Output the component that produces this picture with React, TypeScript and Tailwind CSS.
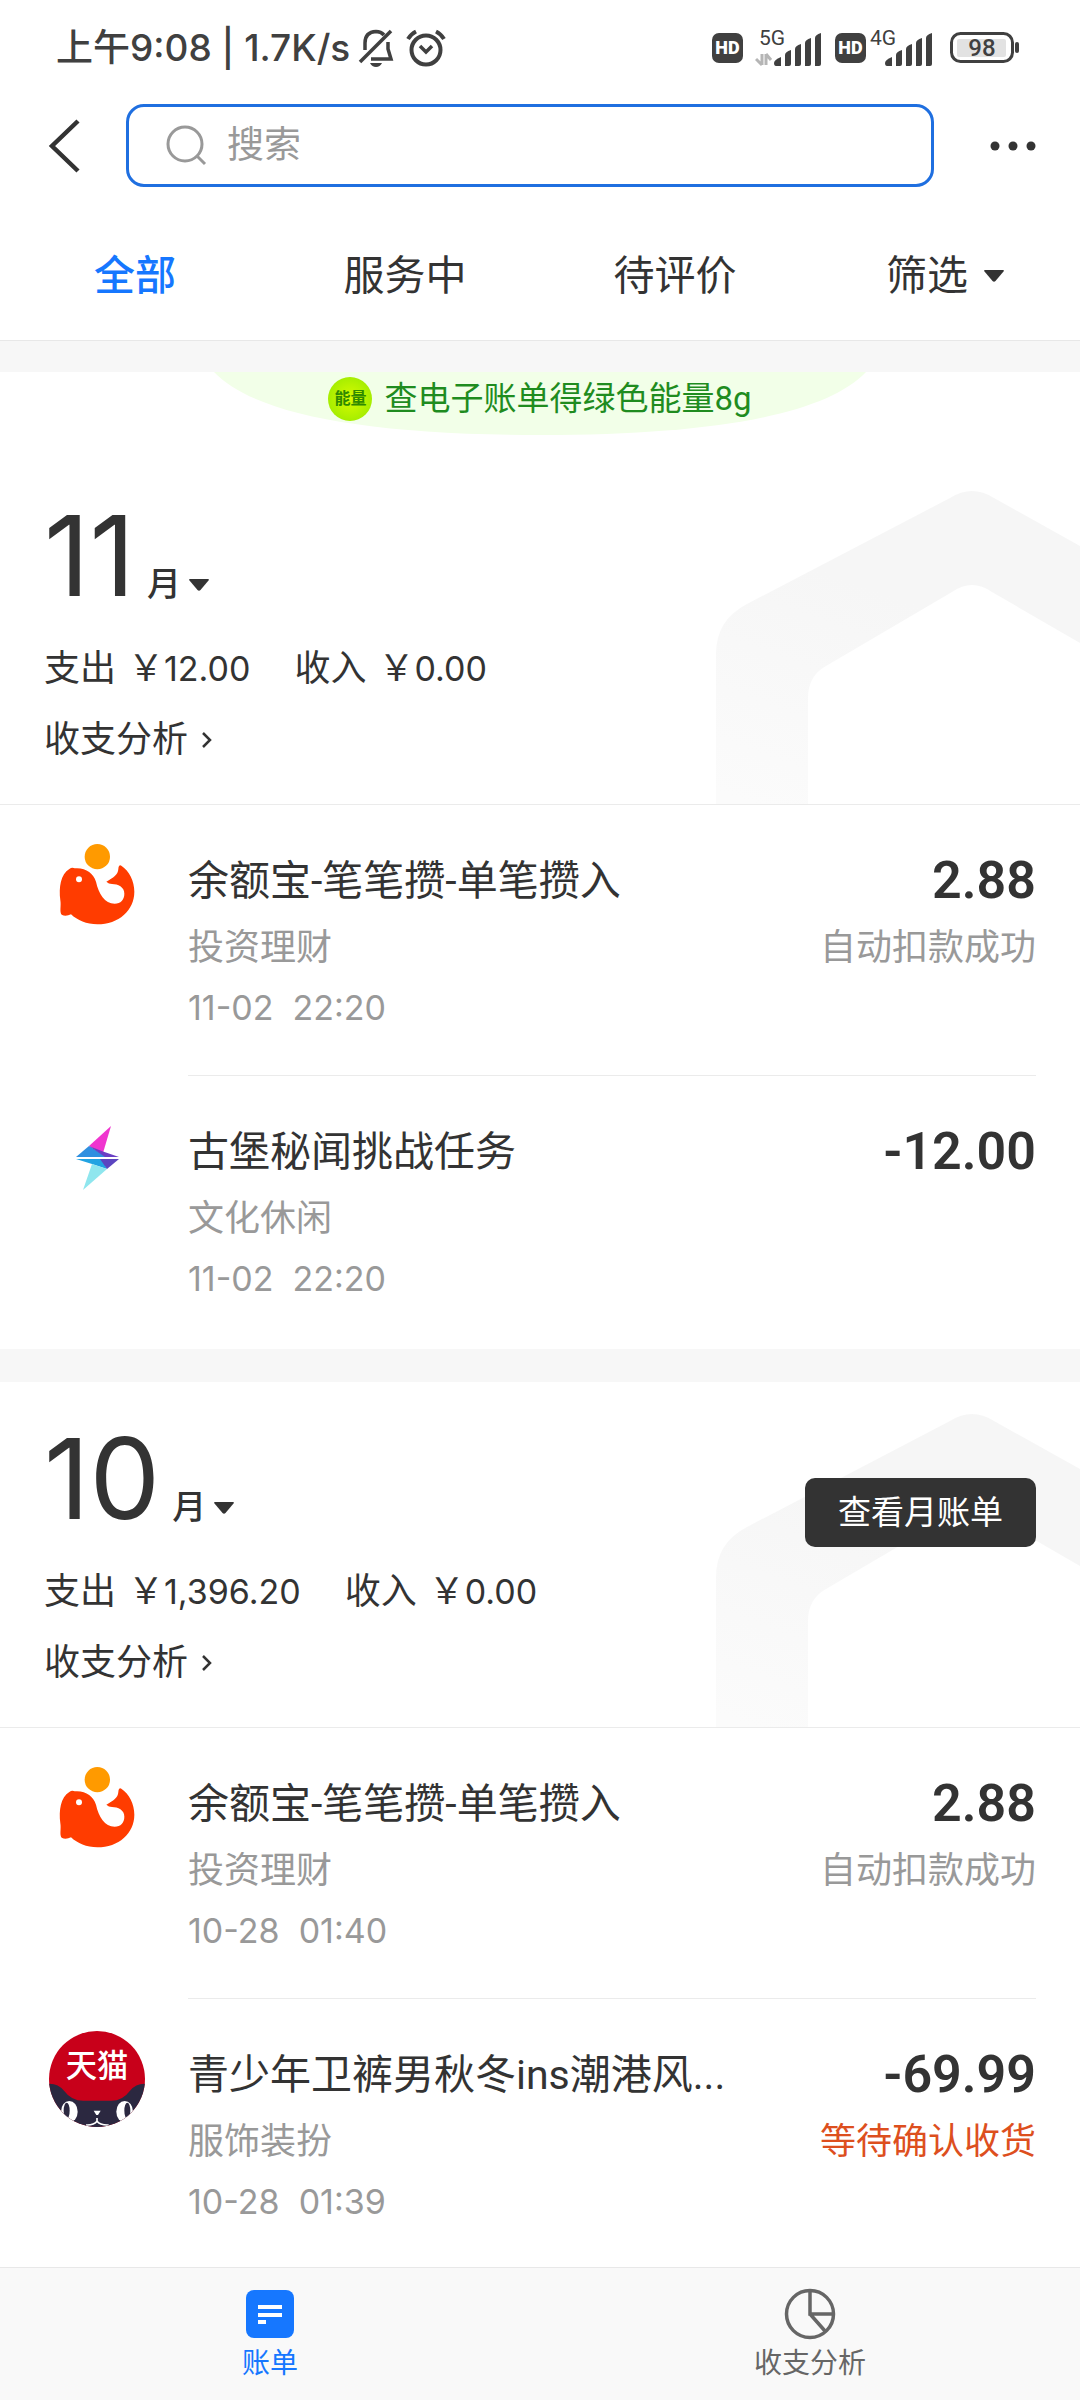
import { useState } from "react";

type IconName = "whale" | "bolt" | "tmall";

interface Bill {
  icon: IconName;
  title: string;
  category: string;
  time: string;
  amount: string;
  status?: string;
  pending?: boolean;
}

interface Month {
  month: number;
  expense: string;
  income: string;
  report?: boolean;
  bills: Bill[];
}

const tabs = ["全部", "服务中", "待评价"];

const months: Month[] = [
  {
    month: 11,
    expense: "12.00",
    income: "0.00",
    bills: [
      {
        icon: "whale",
        title: "余额宝-笔笔攒-单笔攒入",
        category: "投资理财",
        time: "11-02  22:20",
        amount: "2.88",
        status: "自动扣款成功",
      },
      {
        icon: "bolt",
        title: "古堡秘闻挑战任务",
        category: "文化休闲",
        time: "11-02  22:20",
        amount: "-12.00",
      },
    ],
  },
  {
    month: 10,
    expense: "1,396.20",
    income: "0.00",
    report: true,
    bills: [
      {
        icon: "whale",
        title: "余额宝-笔笔攒-单笔攒入",
        category: "投资理财",
        time: "10-28  01:40",
        amount: "2.88",
        status: "自动扣款成功",
      },
      {
        icon: "tmall",
        title: "青少年卫裤男秋冬ins潮港风...",
        category: "服饰装扮",
        time: "10-28  01:39",
        amount: "-69.99",
        status: "等待确认收货",
        pending: true,
      },
    ],
  },
];

function Caret() {
  return (
    <svg width="20" height="12" viewBox="0 0 20 12" fill="currentColor">
      <path d="M1 0h18q1.500 0 .5 1.500L11.500 11q-1.500 1.500-3 0L.5 1.500Q-.5 0 1 0Z" />
    </svg>
  );
}

function HdBadge() {
  return (
    <span className="flex h-[30px] w-[31px] items-center justify-center rounded-[7px] bg-[#404040] text-lg font-black text-white">
      HD
    </span>
  );
}

function Signal({ label, arrows }: { label: string; arrows?: boolean }) {
  return (
    <svg width="68" height="50" viewBox="0 -6 68 50" fill="#404040">
      <text x="4" y="16" fontSize="21">
        {label}
      </text>
      {arrows && (
        <path
          d="M7 25v11M7 36l-6-6M11 36V25M11 25l5 6"
          fill="none"
          stroke="#b5b5b5"
          strokeWidth="3"
        />
      )}
      <path d="M19 34q0-3 7-6v9h-5q-2 0-2-3Z" />
      <path d="M30 26q0-3 6-5v14q0 2-2 2h-4Z" />
      <path d="M40 20q0-3 6-5v20q0 2-2 2h-4Z" />
      <path d="M50 14q0-3 6-5v26q0 2-2 2h-4Z" />
      <path d="M60 9q0-3 6-5v31q0 2-2 2h-4Z" />
    </svg>
  );
}

function StatusBar() {
  return (
    <div className="flex h-24 items-center justify-between pr-[60px] pl-14 text-[#404040]">
      <div className="flex items-center">
        <span className="font-[Inter,'Noto_Sans_CJK_SC',sans-serif] text-[37px] leading-[48px] font-medium whitespace-nowrap">
          上午9:08 | 1.7K/s
        </span>
        <svg className="ml-2" width="36" height="40" viewBox="0 0 36 40" fill="none" stroke="#404040" strokeWidth="3.500">
          <path d="M7 22V15Q7 4 18 3.500Q23 3.500 26 7" />
          <path d="M30 14V21L33 31H13" />
          <path d="M33 3L2 34" />
          <path d="M12 35h12q-2 4-6 4t-6-4Z" fill="#404040" stroke="none" />
        </svg>
        <svg className="ml-3" width="40" height="40" viewBox="0 0 40 40" fill="none" stroke="#404040" strokeWidth="4">
          <circle cx="20" cy="22" r="14.500" />
          <path d="M14 18l6 6 6-6" strokeWidth="3.500" />
          <path d="M2 11Q5 6 10 3.500M38 11Q35 6 30 3.500" />
        </svg>
      </div>
      <div className="flex items-center">
        <HdBadge />
        <span className="ml-3">
          <Signal label="5G" arrows />
        </span>
        <span className="ml-3">
          <HdBadge />
        </span>
        <Signal label="4G" />
        <svg className="ml-4" width="70" height="32" viewBox="0 0 70 32">
          <rect x="1.500" y="1.500" width="61" height="28" rx="9" fill="none" stroke="#404040" strokeWidth="3" />
          <rect x="7" y="7" width="49" height="18" rx="2" fill="#e2e2e2" />
          <rect x="65" y="10" width="4" height="11" rx="2" fill="#404040" />
          <text x="32" y="24" fontSize="24" fontWeight="500" textAnchor="middle" fill="#404040">
            98
          </text>
        </svg>
      </div>
    </div>
  );
}

function SearchBar() {
  return (
    <div className="mt-2 flex items-center px-11">
      <button aria-label="返回" className="flex h-[83px] w-[82px] items-center">
        <svg width="40" height="56" viewBox="0 0 40 56" fill="none" stroke="#333" strokeWidth="4.500">
          <path d="M34 3L8 28L34 53" />
        </svg>
      </button>
      <label className="flex h-[83px] flex-1 items-center gap-5 rounded-[18px] border-3 border-[#1f6fe0] px-9">
        <svg width="42" height="42" viewBox="0 0 42 42" fill="none" stroke="#999" strokeWidth="3">
          <circle cx="20" cy="19" r="17" />
          <path d="M32 31l8 8" />
        </svg>
        <input
          type="text"
          aria-label="搜索"
          placeholder="搜索"
          className="min-w-0 flex-1 text-[37px] leading-[48px] outline-none placeholder:text-[#999]"
        />
      </label>
      <button aria-label="更多" className="flex h-[83px] w-[102px] items-center justify-end">
        <svg width="46" height="10" viewBox="0 0 46 10" fill="#333">
          <circle cx="5" cy="5" r="4.500" />
          <circle cx="23" cy="5" r="4.500" />
          <circle cx="41" cy="5" r="4.500" />
        </svg>
      </button>
    </div>
  );
}

function BillIcon({ name }: { name: IconName }) {
  if (name === "whale") {
    return (
      <svg width="96" height="96" viewBox="-9 0 288 288">
        <circle cx="136" cy="59" r="38" fill="#ff9a00" />
        <path
          fill="#ff3c00"
          d="M52 96Q60 90 68 94C100 91 124 108 132 134C140 170 158 200 188 200C206 200 217 188 217 170C217 150 198 141 180 141Q170 141 163 134C184 122 198 114 199 96Q200 82 208 86C232 102 247 132 247 164C247 220 200 262 136 262C104 262 76 250 57 232C48 236 38 238 29 233C22 226 28 206 25 190C20 150 26 112 52 96Z"
        />
        <circle cx="81" cy="127" r="9" fill="#fff" />
      </svg>
    );
  }
  if (name === "bolt") {
    return (
      <svg width="96" height="96" viewBox="0 0 96 96">
        <path d="M62 18L40 38L54 45Z" fill="#f035cf" />
        <path d="M40 38L27 49H58Z" fill="#2f8fe0" />
        <path d="M40 38L54 43.500L70 49H56Z" fill="#6a3fc4" />
        <path d="M27 51L43 56L58 61L53 51Z" fill="#22a3e2" />
        <path d="M51 51H70L58 61Z" fill="#5b45c0" />
        <path d="M43 56L58 61L34 82Z" fill="#8fe6ee" />
      </svg>
    );
  }
  return (
    <svg width="96" height="96" viewBox="21 29 288 288">
      <defs>
        <clipPath id="tmall">
          <circle cx="165" cy="173" r="144" />
        </clipPath>
      </defs>
      <g clipPath="url(#tmall)">
        <rect x="21" y="29" width="288" height="288" fill="#c8001a" />
        <path d="M21 187Q48 186 66 208Q88 238 124 238H208Q242 238 264 208Q282 186 309 187V317H21Z" fill="#2b2840" />
        <ellipse cx="82" cy="271" rx="25" ry="32" fill="#fff" />
        <ellipse cx="74" cy="268" rx="9" ry="24" fill="#2b2840" />
        <ellipse cx="248" cy="271" rx="25" ry="32" fill="#fff" />
        <ellipse cx="256" cy="268" rx="9" ry="24" fill="#2b2840" />
        <path d="M155 268H176L168 281H163Z" fill="#fff" />
        <path d="M165 290V302M165 300Q156 312 132 311M165 300Q174 312 200 311" stroke="#fff" strokeWidth="5" fill="none" />
      </g>
      <text x="165" y="166" fontSize="94" fontWeight="500" textAnchor="middle" fill="#fff">
        天猫
      </text>
    </svg>
  );
}

function BillRow({ bill }: { bill: Bill }) {
  return (
    <li className="group flex pr-11 pl-[49px]">
      <div className="w-[139px] shrink-0 pt-8">
        <BillIcon name={bill.icon} />
      </div>
      <div className="flex min-w-0 flex-1 justify-between border-b border-[#ebebeb] pt-12 pb-[43px] group-last:border-0 group-last:pb-0">
        <div className="min-w-0">
          <h3 className="truncate text-[41px] leading-[56px]">{bill.title}</h3>
          <p className="mt-[15px] text-[36px] leading-[48px] text-[#999]">{bill.category}</p>
          <p className="mt-3 font-[Inter,sans-serif] text-[34px] leading-[48px] whitespace-pre text-[#999]">
            {bill.time}
          </p>
        </div>
        <div className="shrink-0 text-right">
          <p className="text-[52px] leading-[56px] font-semibold">{bill.amount}</p>
          {bill.status && (
            <p className={`mt-[15px] text-[36px] leading-[48px] ${bill.pending ? "text-[#dd4f1e]" : "text-[#999]"}`}>
              {bill.status}
            </p>
          )}
        </div>
      </div>
    </li>
  );
}

function Total({ label, value }: { label: string; value: string }) {
  return (
    <span className="flex items-baseline gap-3">
      <span>{label}</span>
      <span>
        ￥<span className="font-[Inter,sans-serif] text-[34px]">{value}</span>
      </span>
    </span>
  );
}

function MonthHeader({ data }: { data: Month }) {
  return (
    <div className="relative border-b border-[#ebebeb] px-11 pt-10 pb-10">
      <svg className="absolute right-0 bottom-0" width="364" height="316" viewBox="0 0 364 316">
        <defs>
          <linearGradient id={`roof-${data.month}`} x1="0.100" y1="1" x2="0.400" y2="0.300">
            <stop offset="0" stopColor="#fbfbfb" />
            <stop offset="1" stopColor="#f6f6f6" />
          </linearGradient>
        </defs>
        <path
          fill={`url(#roof-${data.month})`}
          d="M0 316V166Q0 132 31 116L234 10Q256 -4 278 10L364 58V155L276 104Q256 90 236 104L110 178Q92 188 92 210V316Z"
        />
      </svg>
      <div className="relative flex h-[125px] items-start justify-between">
        <button className="flex items-baseline">
          <span className="font-[Inter,sans-serif] text-[112px] leading-[112px]">{data.month}</span>
          <span className="ml-3 text-[34px] leading-[48px] font-medium">月</span>
          <span className="ml-2 self-end pb-5">
            <Caret />
          </span>
        </button>
        {data.report && (
          <button className="h-[69px] self-end rounded-[10px] bg-[#333] px-[33px] text-[33px] text-white">
            查看月账单
          </button>
        )}
      </div>
      <div className="relative mt-[21px] flex gap-11 text-[36px] leading-[48px]">
        <Total label="支出" value={data.expense} />
        <Total label="收入" value={data.income} />
      </div>
      <a href="#analysis" className="relative mt-[23px] flex items-center gap-3 text-[36px] leading-[48px]">
        收支分析
        <svg width="14" height="18" viewBox="0 0 14 18" fill="none" stroke="#333" strokeWidth="2.500">
          <path d="M3 2l7 7-7 7" />
        </svg>
      </a>
    </div>
  );
}

export default function App() {
  const [active, setActive] = useState("全部");

  return (
    <div className="flex min-h-screen flex-col bg-white font-[Roboto,'Noto_Sans_CJK_SC',sans-serif] text-[#333]">
      <header className="border-b border-[#e8e8e8]">
        <StatusBar />
        <SearchBar />
        <nav className="grid grid-cols-4 pt-[61px] pb-9 text-[41px] leading-[56px]">
          {tabs.map((tab) => (
            <button
              key={tab}
              onClick={() => setActive(tab)}
              className={active === tab ? "font-medium text-[#1677ff]" : ""}
            >
              {tab}
            </button>
          ))}
          <button className="flex items-center justify-center gap-4">
            筛选
            <Caret />
          </button>
        </nav>
      </header>

      <main className="flex-1">
        <div className="h-[31px] bg-[#f7f7f7]" />
        <div className="flex h-[87px] justify-center">
          <div className="relative flex h-[63px] w-[652px] items-start justify-center overflow-hidden">
            <svg className="absolute inset-0" width="652" height="63" viewBox="0 0 652 63">
              <path d="M0 0C40 42 150 63 326 63S612 42 652 0Z" fill="#f2ffe8" />
            </svg>
            <a href="#energy" className="relative flex items-center gap-3 text-[33px] leading-[54px] text-[#1f8c1f]">
              <span className="flex size-11 items-center justify-center rounded-full bg-radial from-[#d8fb00] to-[#8fe800] text-base font-bold text-[#2f8a00]">
                能量
              </span>
              查电子账单得绿色能量8g
            </a>
          </div>
        </div>

        {months.map((m) => (
          <section key={m.month} className="border-b-33 border-[#f7f7f7] pb-[46px] last:border-0 last:pb-8">
            <MonthHeader data={m} />
            <ul>
              {m.bills.map((bill) => (
                <BillRow key={bill.title} bill={bill} />
              ))}
            </ul>
          </section>
        ))}
      </main>

      <footer className="sticky bottom-0 grid grid-cols-2 border-t border-[#e8e8e8] bg-[#f9f9f9] text-[28px] leading-8">
        <a href="#bills" className="flex flex-col items-center gap-2 pt-5 pb-5 text-[#1677ff]">
          <svg width="52" height="52" viewBox="0 0 52 52">
            <rect x="2" y="2" width="48" height="48" rx="8" fill="#1677ff" />
            <path d="M14 19h24M14 27h24M14 34h8" stroke="#fff" strokeWidth="4" />
          </svg>
          账单
        </a>
        <a href="#analysis" className="flex flex-col items-center gap-2 pt-5 pb-5 text-[#666]">
          <svg width="52" height="52" viewBox="0 0 52 52" fill="none" stroke="#666" strokeWidth="3.500">
            <circle cx="26" cy="26" r="23.500" />
            <path d="M26 3V26H49M26 26L41 43" />
          </svg>
          收支分析
        </a>
      </footer>
    </div>
  );
}
